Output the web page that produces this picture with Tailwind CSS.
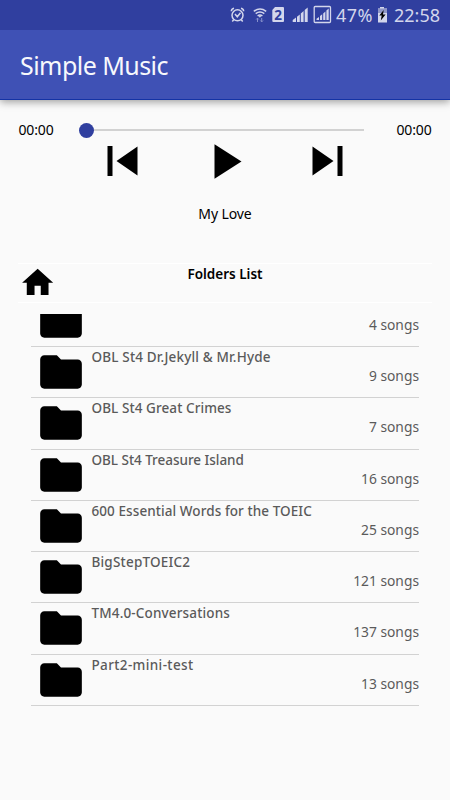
<!DOCTYPE html>
<html lang="en">
<head>
<meta charset="utf-8">
<title>Simple Music</title>
<script src="https://cdn.jsdelivr.net/npm/@tailwindcss/browser@4"></script>
</head>
<body class="w-[450px] h-[800px] overflow-hidden bg-[#fafafa] font-['Noto_Sans',sans-serif] text-black flex flex-col">
<svg class="hidden"><symbol id="folder" viewBox="0 0 24 24"><path d="M10 4H4c-1.1 0-1.99.9-1.99 2L2 18c0 1.1.9 2 2 2h16c1.1 0 2-.9 2-2V8c0-1.1-.9-2-2-2h-8l-2-2z"/></symbol></svg>
<header class="shrink-0 shadow-[0_2px_8px_rgba(0,0,0,0.38)]">
  <div class="h-[30px] bg-[#303f9f] flex items-center text-[#d3d6ec] pl-[230px]">
    <svg class="w-[106px] h-[30px] shrink-0" viewBox="230 0 106 30" fill="none" stroke="#d3d6ec" stroke-width="1.5">
      <circle cx="237.500" cy="15.300" r="5.500"/><path d="M231.300 11.200Q231.500 8.800 234 8.200M241 8.200Q243.500 8.800 243.700 11.200M233.700 19.700L232.300 21.500M241.300 19.700L242.700 21.500M235 14L237.300 16.800L240.500 12.800"/>
      <path d="M253.800 11.300Q260 6.700 266.200 11.300M255.700 13.600Q260 10.300 264.300 13.600M257.600 15.800Q260 14.200 262.400 15.800"/><path d="M258.300 15.700h3.200l-1.600 2z" fill="#d3d6ec" stroke="none"/>
      <path d="M257.500 22v-3.800M256.200 19.500l1.300-1.400 1.300 1.400M261.700 18v3.800M260.400 20.500l1.300 1.400 1.300-1.400" stroke="#8790cb" stroke-width="1"/>
      <path d="M275 7h8q1 0 1 1v13q0 1-1 1h-9.700q-1 0-1-1V10z" fill="#d3d6ec" stroke="none"/>
      <text x="274.300" y="19.600" fill="#303f9f" stroke="none" font-size="13.500" font-weight="700">2</text>
      <g fill="#d3d6ec" stroke="none"><path d="M292.700 20l3.300-2.600V22h-3.300zM297 16.700l2.800-2.300V22H297zM300.800 13.500l2.800-2.400V22h-2.800zM304.700 10.100l3-2.700V22h-3z"/><path d="M316.500 18.700l2.500-1.800V20h-2.500zM320 16l2.200-1.800V20H320zM323.200 13.400l2.200-1.800V20h-2.200zM326.400 10.600l2.300-2V20h-2.300z"/></g>
      <rect x="314.200" y="6.500" width="16.300" height="16" rx="1" stroke-width="1.300"/>
    </svg>
    <span class="text-[18px] leading-[30px] w-[41px] tracking-[0.400px] whitespace-nowrap">47%</span>
    <svg class="w-[11px] h-[16px] shrink-0" viewBox="0 0 11 16"><path d="M3 0h4v1.500h3v14H1v-14h2z" fill="#d3d6ec"/><path d="M1 1.500h9V6H1z" fill="#8f96c6"/><path d="M6.700 3L2.300 8.500h2.400L3.800 13.500l4.800-6H6z" fill="#000"/></svg>
    <span class="text-[18px] leading-[30px] ml-[6px] whitespace-nowrap">22:58</span>
  </div>
  <div class="h-[70px] bg-[#3f51b5] border-b border-[#1433a5] pl-[20px] flex items-center">
    <h1 class="text-[25px] leading-[36px] tracking-[-0.550px] text-[#f7f8fc] whitespace-nowrap">Simple Music</h1>
  </div>
</header>
<section class="shrink-0 h-[163px] px-[18px] pt-[18px]">
  <div class="flex items-center justify-between h-[23px] text-[14px] tracking-[-0.150px]">
    <span class="w-[60px] pl-[0.500px]">00:00</span>
    <div class="flex items-center w-[286px] mt-px"><span class="size-[15px] ml-[0.500px] rounded-full bg-[#303f9f] shrink-0"></span><span class="h-[2.500px] grow bg-[#d2d2d2]"></span></div>
    <span class="w-[68px] text-right pr-[0.500px]">00:00</span>
  </div>
  <div class="flex justify-between items-center h-[40px] pl-[89px] pr-[89px]">
    <svg class="w-[31px] h-[30px]" viewBox="0 0 31 30"><path d="M.5 0h5v30h-5zM9.500 15L30.500.5v29z"/></svg>
    <svg class="w-[28px] h-[35px] ml-[6px]" viewBox="0 0 28 35"><path d="M.5.3L27.500 17.500.5 34.700z"/></svg>
    <svg class="w-[31px] h-[30px]" viewBox="0 0 31 30"><path d="M30.500 0h-5v30h5zM21.500 15L.5.5v29z"/></svg>
  </div>
  <p class="text-center text-[14px] leading-[20px] mt-[23px] tracking-[-0.100px]">My Love</p>
</section>
<section class="shrink-0 h-[40px] mx-[18px] border-y border-white grid grid-cols-[40px_1fr_40px]">
  <svg class="size-[37.300px] ml-px" viewBox="0 0 24 24"><path d="M10 20v-6h4v6h5v-8h3L12 3 2 12h3v8z"/></svg>
  <h2 class="text-center text-[13.500px] leading-[20px] font-semibold">Folders List</h2>
</section>
<ul class="mt-[11px] h-[392px] mx-[31px] overflow-hidden flex flex-col justify-end shrink-0 text-[#5a5a5a]">
  <li class="h-[51.300px] shrink-0 border-b border-[#d2d2d2] flex pl-[5px]"><svg class="size-[50px] shrink-0 fill-black"><use href="#folder"/></svg><div class="grow pl-[5.500px]"><p class="text-[13.500px] leading-[20px] font-medium">&nbsp;</p><p class="text-right text-[13.800px] leading-[18px]">4 songs</p></div></li>
  <li class="h-[51.300px] shrink-0 border-b border-[#d2d2d2] flex pl-[5px]"><svg class="size-[50px] shrink-0 fill-black"><use href="#folder"/></svg><div class="grow pl-[5.500px]"><p class="text-[13.500px] leading-[20px] font-medium tracking-[0.170px]">OBL St4 Dr.Jekyll &amp; Mr.Hyde</p><p class="text-right text-[13.800px] leading-[18px]">9 songs</p></div></li>
  <li class="h-[51.300px] shrink-0 border-b border-[#d2d2d2] flex pl-[5px]"><svg class="size-[50px] shrink-0 fill-black"><use href="#folder"/></svg><div class="grow pl-[5.500px]"><p class="text-[13.500px] leading-[20px] font-medium tracking-[0.080px]">OBL St4 Great Crimes</p><p class="text-right text-[13.800px] leading-[18px]">7 songs</p></div></li>
  <li class="h-[51.300px] shrink-0 border-b border-[#d2d2d2] flex pl-[5px]"><svg class="size-[50px] shrink-0 fill-black"><use href="#folder"/></svg><div class="grow pl-[5.500px]"><p class="text-[13.500px] leading-[20px] font-medium tracking-[-0.030px]">OBL St4 Treasure Island</p><p class="text-right text-[13.800px] leading-[18px]">16 songs</p></div></li>
  <li class="h-[51.300px] shrink-0 border-b border-[#d2d2d2] flex pl-[5px]"><svg class="size-[50px] shrink-0 fill-black"><use href="#folder"/></svg><div class="grow pl-[5.500px]"><p class="text-[13.500px] leading-[20px] font-medium tracking-[0.080px]">600 Essential Words for the TOEIC</p><p class="text-right text-[13.800px] leading-[18px]">25 songs</p></div></li>
  <li class="h-[51.300px] shrink-0 border-b border-[#d2d2d2] flex pl-[5px]"><svg class="size-[50px] shrink-0 fill-black"><use href="#folder"/></svg><div class="grow pl-[5.500px]"><p class="text-[13.500px] leading-[20px] font-medium tracking-[0.200px]">BigStepTOEIC2</p><p class="text-right text-[13.800px] leading-[18px]">121 songs</p></div></li>
  <li class="h-[51.300px] shrink-0 border-b border-[#d2d2d2] flex pl-[5px]"><svg class="size-[50px] shrink-0 fill-black"><use href="#folder"/></svg><div class="grow pl-[5.500px]"><p class="text-[13.500px] leading-[20px] font-medium tracking-[0.150px]">TM4.0-Conversations</p><p class="text-right text-[13.800px] leading-[18px]">137 songs</p></div></li>
  <li class="h-[51.300px] shrink-0 border-b border-[#d2d2d2] flex pl-[5px]"><svg class="size-[50px] shrink-0 fill-black"><use href="#folder"/></svg><div class="grow pl-[5.500px]"><p class="text-[13.500px] leading-[20px] font-medium tracking-[0.370px]">Part2-mini-test</p><p class="text-right text-[13.800px] leading-[18px]">13 songs</p></div></li>
</ul>
</body>
</html>
